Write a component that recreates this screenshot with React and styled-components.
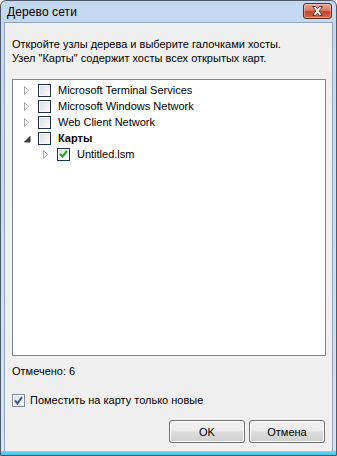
import React from "react";
import styled, { createGlobalStyle } from "styled-components";

const Global = createGlobalStyle`
  html, body { margin: 0; padding: 0; background: #ffffff; }
  body { font-family: "Liberation Sans", Arial, sans-serif; }
`;

const Window = styled.div`
  width: 337px;
  height: 456px;
  box-sizing: border-box;
  border: 1px solid #4d5a6c;
  border-radius: 6px 6px 0 0;
  background: linear-gradient(to bottom, #c4d8ef 0%, #cadcf1 40%, #d6e4f5 100%);
  display: flex;
  flex-direction: column;
  overflow: hidden;
`;

const TitleBar = styled.div`
  height: 21px;
  display: flex;
  align-items: center;
  justify-content: space-between;
  padding: 0 4px 0 6px;
`;

const Title = styled.span`
  font-size: 12px;
  color: #000;
  letter-spacing: 0.1px;
`;

const CloseButton = styled.div`
  width: 27px;
  height: 14px;
  margin-top: -2px;
  border: 1px solid #5e2a24;
  border-radius: 3px;
  background: linear-gradient(to bottom, #e8a493 0%, #d97d66 45%, #c2442c 55%, #d36a4c 100%);
  display: flex;
  align-items: center;
  justify-content: center;
  box-shadow: inset 0 0 0 1px rgba(255, 255, 255, 0.35);
`;

const Client = styled.div`
  flex: 1;
  margin: 0 3px;
  border: 1px solid #8fa3bd;
  border-bottom: none;
  background: #f0f0f0;
  display: flex;
  flex-direction: column;
  padding: 14px 6px 0 7px;
  font-size: 11px;
  color: #000;
`;

const BottomEdge = styled.div`
  height: 4px;
  background: linear-gradient(to bottom, #7fd6ee, #3ec3e6);
`;

const Intro = styled.p`
  margin: 0;
  line-height: 14px;
`;

const TreeBox = styled.div`
  margin-top: 14px;
  height: 277px;
  box-sizing: border-box;
  border: 1px solid #828790;
  background: #fff;
  padding-top: 2px;
`;

const Row = styled.div`
  height: 16px;
  display: flex;
  align-items: center;
  padding-left: ${(p) => 10 + p.$level * 19}px;
`;

const Expander = styled.div`
  width: 15px;
  height: 16px;
  display: flex;
  align-items: center;
`;

const Box = styled.div`
  width: 13px;
  height: 13px;
  box-sizing: border-box;
  border: 1px solid ${(p) => (p.$soft ? "#7f8a9c" : "#1f3351")};
  background: linear-gradient(135deg, #dcdcdc 0%, #f0f0f0 60%, #fbfbfb 100%);
  box-shadow: inset 0 0 0 1px #f8f8f8;
  display: flex;
  align-items: center;
  justify-content: center;
`;

const Label = styled.span`
  margin-left: 7px;
  font-weight: ${(p) => (p.$bold ? 700 : 400)};
  white-space: nowrap;
`;

const Counter = styled.div`
  margin-top: 8px;
  line-height: 14px;
`;

const OptionRow = styled.label`
  margin-top: 15px;
  display: flex;
  align-items: center;
  height: 14px;
`;

const OptionText = styled.span`
  margin-left: 5px;
`;

const ButtonRow = styled.div`
  margin-top: 13px;
  display: flex;
  justify-content: flex-end;
  gap: 4px;
  padding-right: 1px;
`;

const Button = styled.div`
  width: 76px;
  height: 23px;
  box-sizing: border-box;
  border: 1px solid #707070;
  border-radius: 3px;
  background: linear-gradient(to bottom, #f2f2f2 0%, #ebebeb 49%, #dddddd 51%, #cfcfcf 100%);
  box-shadow: inset 0 0 0 1px #fcfcfc;
  display: flex;
  align-items: center;
  justify-content: center;
  font-size: 11px;
`;

const CollapsedArrow = () => (
  <svg width="6" height="9" viewBox="0 0 6 9" style={{ marginLeft: 1 }}>
    <path d="M0.5 0.5 L4.5 4.5 L0.5 8.5 Z" fill="#fff" stroke="#a6a6a6" strokeWidth="1" />
  </svg>
);

const ExpandedArrow = () => (
  <svg width="7" height="7" viewBox="0 0 7 7" style={{ marginLeft: 1, marginTop: 2 }}>
    <path d="M6 0.5 L6 6 L0.5 6 Z" fill="#3a3a3a" stroke="#3a3a3a" strokeWidth="1" />
  </svg>
);

const GreenCheck = () => (
  <svg width="9" height="8" viewBox="0 0 9 8">
    <path d="M1 4 L3.5 6.5 L8 1" fill="none" stroke="#1fa51f" strokeWidth="2" />
  </svg>
);

const BlueCheck = () => (
  <svg width="9" height="9" viewBox="0 0 9 9">
    <path d="M1 4.5 L3.5 7.5 L8 1" fill="none" stroke="#3c54a0" strokeWidth="2" />
  </svg>
);

const items = [
  { label: "Microsoft Terminal Services", level: 0 },
  { label: "Microsoft Windows Network", level: 0 },
  { label: "Web Client Network", level: 0 },
  { label: "Карты", level: 0, bold: true, open: true },
  { label: "Untitled.lsm", level: 1, checked: true },
];

export default function App() {
  return (
    <>
      <Global />
      <Window>
        <TitleBar>
          <Title>Дерево сети</Title>
          <CloseButton>
            <svg width="13" height="10" viewBox="0 0 13 10">
              <path
                d="M1.5 0.5 L4.5 0.5 L6.5 2.8 L8.5 0.5 L11.5 0.5 L8 5 L11.5 9.5 L8.5 9.5 L6.5 7.2 L4.5 9.5 L1.5 9.5 L5 5 Z"
                fill="#ffffff"
                stroke="#5a2a24"
                strokeWidth="0.9"
              />
            </svg>
          </CloseButton>
        </TitleBar>
        <Client>
          <Intro>
            Откройте узлы дерева и выберите галочками хосты.
            <br />
            Узел "Карты" содержит хосты всех открытых карт.
          </Intro>
          <TreeBox>
            {items.map((item, index) => (
              <Row key={index} $level={item.level}>
                <Expander>{item.open ? <ExpandedArrow /> : <CollapsedArrow />}</Expander>
                <Box>{item.checked && <GreenCheck />}</Box>
                <Label $bold={item.bold}>{item.label}</Label>
              </Row>
            ))}
          </TreeBox>
          <Counter>Отмечено: 6</Counter>
          <OptionRow>
            <Box $soft>
              <BlueCheck />
            </Box>
            <OptionText>Поместить на карту только новые</OptionText>
          </OptionRow>
          <ButtonRow>
            <Button>OK</Button>
            <Button>Отмена</Button>
          </ButtonRow>
        </Client>
        <BottomEdge />
      </Window>
    </>
  );
}
